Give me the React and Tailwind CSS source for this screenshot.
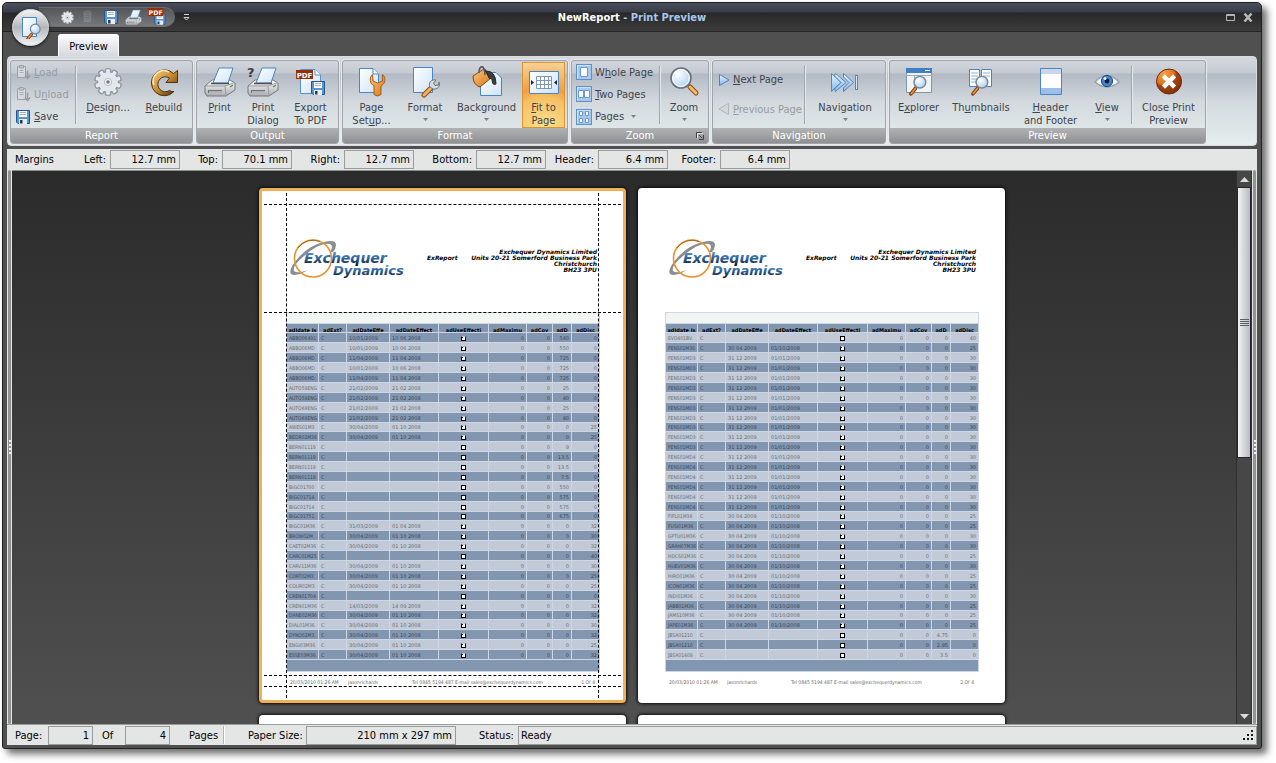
// src/App.jsx

import { Fragment } from "react";

const MARGINS = [
  { id: "left", label: "Left:", value: "12.7 mm", width: "w-[36px]" },
  { id: "top", label: "Top:", value: "70.1 mm", width: "w-[38px]" },
  { id: "right", label: "Right:", value: "12.7 mm", width: "w-[48px]" },
  { id: "bottom", label: "Bottom:", value: "12.7 mm", width: "w-[58px]" },
  { id: "header", label: "Header:", value: "6.4 mm", width: "w-[48px]" },
  { id: "footer", label: "Footer:", value: "6.4 mm", width: "w-[48px]" },
];

const COLUMNS = [
  { name: "adIdate Is", width: "w-[32px]" },
  { name: "adExt?", width: "w-[28px]" },
  { name: "adDateEffe", width: "w-[43px]" },
  { name: "adDateEffect", width: "w-[49px]" },
  { name: "adUseEffecti", width: "w-[50px]" },
  { name: "adMaximu", width: "w-[38px]" },
  { name: "adCov", width: "w-[26px]" },
  { name: "adD", width: "w-[19px]" },
  { name: "adDisc", width: "w-[28px]" },
];

// ref, start, end, ticked, price, discount
const PAGE_ONE = [
  ["ABBO06491", "10/01/2009", "10 06 2008", true, "540", "0"],
  ["ABBO06MD", "10/01/2009", "10 06 2008", true, "550", "0"],
  ["ABBO06MD", "11/04/2009", "11 04 2008", true, "725", "0"],
  ["ABBO06MD", "10/01/2009", "10 06 2008", true, "725", "0"],
  ["ABBO06MD", "11/04/2009", "11 04 2008", true, "725", "0"],
  ["AUTO59ENG", "21/02/2009", "21 02 2008", true, "25", "0"],
  ["AUTO59ENG", "21/02/2009", "21 02 2008", true, "40", "0"],
  ["AUTO69ENG", "21/02/2009", "21 02 2008", true, "25", "0"],
  ["AUTO69ENG", "21/02/2009", "21 02 2008", true, "40", "0"],
  ["AWES01M3", "30/04/2009", "01 10 2008", true, "0", "25"],
  ["BEDR02M36", "30/04/2009", "01 10 2008", true, "0", "25"],
  ["BERN01119", "", "", false, "9", "0"],
  ["BERN01119", "", "", false, "13.5", "0"],
  ["BERN01119", "", "", false, "13.5", "0"],
  ["BERN01119", "", "", false, "7.5", "0"],
  ["BIGC01700", "", "", false, "550", "0"],
  ["BIGC01714", "", "", false, "575", "0"],
  ["BIGC01714", "", "", false, "575", "0"],
  ["BIGC01751", "", "", false, "675", "0"],
  ["BIGC01M36", "31/03/2009", "01 04 2008", true, "0", "32"],
  ["BROW02M", "30/04/2009", "01 10 2008", true, "0", "30"],
  ["CAET02M36", "30/04/2009", "01 10 2008", true, "0", "32"],
  ["CARC01M25", "", "", false, "0", "40"],
  ["CARV11M36", "30/04/2009", "01 10 2008", true, "0", "30"],
  ["CORT02M3", "30/04/2009", "01 10 2008", true, "0", "25"],
  ["COUR02M3", "30/04/2009", "01 10 2008", true, "0", "25"],
  ["CREN01704", "", "", false, "0", "0"],
  ["CREN01M36", "14/03/2009", "14 09 2008", true, "0", "32"],
  ["DANE02M36", "30/04/2009", "01 10 2008", true, "0", "32"],
  ["DIAL01M36", "30/04/2009", "01 10 2008", true, "0", "30"],
  ["DYNO02M3", "30/04/2009", "01 10 2008", true, "0", "32"],
  ["ENGI03M36", "30/04/2009", "01 10 2008", true, "0", "25"],
  ["ESSE03M36", "30/04/2009", "01 10 2008", true, "0", "32"],
];

const fens = (ref) => [ref, "31 12 2009", "01/01/2009", true, "0", "30"];
const april = (ref, discount) => [ref, "30 04 2009", "01/10/2008", true, "0", discount];

const PAGE_TWO = [
  ["EVO401BV.", "", "", false, "0", "40"],
  april("FENS01M36", "25"),
  ...Array.from({ length: 10 }, () => fens("FENS01MD3")),
  ...Array.from({ length: 6 }, () => fens("FENS01MD4")),
  april("FIFL01M36", "25"),
  april("FUSI01M36", "25"),
  april("GPTU01M36", "30"),
  april("GRAH07M36", "30"),
  april("HDCS01M36", "25"),
  april("HUEV01M36", "30"),
  april("HIRO01M36", "25"),
  april("ICON01M36", "25"),
  april("INDI01M36", "30"),
  april("JABB01M36", "25"),
  april("JAMS10M36", "25"),
  april("JAPE01M36", "25"),
  ["JBSA01210", "", "", false, "4.75", "0"],
  ["JBSA01210", "", "", false, "2.95", "0"],
  ["JBSA01409", "", "", false, "3.5", "0"],
];

/* ---------- icons ---------- */

function Icon({ size = 32, className = "", children }) {
  return (
    <svg
      width={size}
      height={size}
      viewBox={`0 0 ${size} ${size}`}
      fill="none"
      className={`shrink-0 ${className}`}
      aria-hidden="true"
    >
      {children}
    </svg>
  );
}

function Defs() {
  return (
    <svg width="0" height="0" className="absolute" aria-hidden="true">
      <defs>
        <linearGradient id="paper" x1="0" y1="0" x2="1" y2="1">
          <stop offset="0" stopColor="#ffffff" />
          <stop offset="1" stopColor="#cfe3f8" />
        </linearGradient>
        <linearGradient id="orange" x1="0" y1="0" x2="1" y2="1">
          <stop offset="0" stopColor="#fbc878" />
          <stop offset="1" stopColor="#d8741c" />
        </linearGradient>
        <linearGradient id="steel" x1="0" y1="0" x2="0" y2="1">
          <stop offset="0" stopColor="#fdfdfd" />
          <stop offset="1" stopColor="#a9adb2" />
        </linearGradient>
        <linearGradient id="gold" x1="0" y1="0" x2="1" y2="1">
          <stop offset="0" stopColor="#f9d48a" />
          <stop offset="0.5" stopColor="#c98a2e" />
          <stop offset="1" stopColor="#3a2a14" />
        </linearGradient>
        <linearGradient id="blue" x1="0" y1="0" x2="0" y2="1">
          <stop offset="0" stopColor="#e9f4fe" />
          <stop offset="1" stopColor="#86b6e6" />
        </linearGradient>
        <radialGradient id="glass" cx="0.35" cy="0.3" r="0.8">
          <stop offset="0" stopColor="#ffffff" />
          <stop offset="1" stopColor="#a9cdee" />
        </radialGradient>
        <radialGradient id="ember" cx="0.3" cy="0.2" r="0.9">
          <stop offset="0" stopColor="#f9a24a" />
          <stop offset="0.45" stopColor="#e0721c" />
          <stop offset="0.55" stopColor="#a8430f" />
          <stop offset="1" stopColor="#7a2c0c" />
        </radialGradient>
        <linearGradient id="logoBlue" x1="0" y1="0" x2="0" y2="1">
          <stop offset="0" stopColor="#6aa6da" />
          <stop offset="0.5" stopColor="#2f66a0" />
          <stop offset="1" stopColor="#0b1726" />
        </linearGradient>
      </defs>
    </svg>
  );
}

const teeth = [0, 36, 72, 108, 144, 180, 216, 252, 288, 324];

function GearIcon({ size = 32 }) {
  return (
    <svg width={size} height={size} viewBox="0 0 32 32" className="shrink-0" aria-hidden="true">
      <g fill="#eef0f3" stroke="#8f98a4" strokeWidth="1.4">
        {teeth.map((a) => (
          <rect key={a} x="13.4" y="2.6" width="5.2" height="6" rx="1.8" transform={`rotate(${a} 16 16)`} />
        ))}
        <circle cx="16" cy="16" r="10.4" />
      </g>
      {teeth.map((a) => (
        <rect key={a} x="14.2" y="4.4" width="3.6" height="5" fill="#e6e9ed" transform={`rotate(${a} 16 16)`} />
      ))}
      <circle cx="16" cy="16" r="9.4" fill="#e3e6ea" />
      <circle cx="16" cy="16" r="3.6" fill="#f6f7f8" stroke="#b4bac2" />
      <circle cx="16" cy="16" r="1.8" fill="#6f7986" />
    </svg>
  );
}

function RebuildIcon() {
  return (
    <Icon>
      <path
        d="M26 25.500A13 13 0 1 1 25.500 7.500L29.500 4.500V16.500H18L21.500 12A7.500 7.500 0 1 0 21.500 24.500Q24 26 26 25.500Z"
        fill="url(#gold)"
        stroke="#4a3516"
      />
      <path d="M6 19A10.500 10.500 0 0 1 21 6" stroke="#fbe3ab" strokeWidth="1.600" />
    </Icon>
  );
}

function PrinterBody() {
  return (
    <>
      <path d="M1 20L8 14H26L31 17V24L22 30H3L1 27Z" fill="url(#steel)" stroke="#77797d" />
      <path d="M1 20H21L31 16.500M21 20L22 30" stroke="#9a9da1" />
      <path d="M4 24H18V27H4Z" fill="#6e7175" />
      <path d="M5 26H18" stroke="#f3f3f3" />
      <path d="M9 17L15 2H29L24 17Z" fill="url(#paper)" stroke="#4a86c5" />
      <path d="M7 17.500H25" stroke="#4d4f52" strokeWidth="1.500" />
      <path d="M26 21L29 19" stroke="#4c9a3d" strokeWidth="1.500" />
    </>
  );
}

function PrinterIcon({ size = 32 }) {
  return (
    <svg width={size} height={size} viewBox="0 0 32 32" fill="none" className="shrink-0" aria-hidden="true">
      <PrinterBody />
    </svg>
  );
}

function PrintDialogIcon() {
  return (
    <Icon className="overflow-visible">
      <PrinterBody />
      <text x="0" y="11" fontSize="13" fontWeight="bold" fill="#3a3c40" fontFamily="DejaVu Sans">
        ?
      </text>
    </Icon>
  );
}

function Floppy() {
  return (
    <>
      <path d="M1.500 1.500H14.500V14.500H3L1.500 13Z" fill="#5a93d0" stroke="#245591" />
      <path d="M4 2H12V8H4Z" fill="#fff" />
      <path d="M5 3.500H11M5 5.500H11" stroke="#9fb0c2" />
      <path d="M4 10H12V15H4Z" fill="#e6edf4" />
      <path d="M5 11H7.500V14.500H5Z" fill="#223a56" />
    </>
  );
}

function SaveIcon() {
  return (
    <Icon size={16}>
      <Floppy />
    </Icon>
  );
}

function PdfBadge({ className }) {
  return (
    <g className={className}>
      <rect width="17" height="9" fill="#93300b" />
      <text x="8.500" y="7.500" fontSize="7" fontWeight="bold" textAnchor="middle" fill="#fff" fontFamily="DejaVu Sans">
        PDF
      </text>
    </g>
  );
}

function PdfIcon() {
  return (
    <Icon>
      <path d="M5.500 3.500H20L25.500 9V27.500H5.500Z" fill="url(#paper)" stroke="#5792cf" />
      <path d="M20 3.500V9H25.500" fill="#fff" stroke="#5792cf" />
      <g transform="translate(15 14)">
        <Floppy />
      </g>
      <g transform="translate(1 4)">
        <PdfBadge />
      </g>
    </Icon>
  );
}

function PdfSmallIcon() {
  return (
    <svg width="18" height="18" viewBox="0 0 20 20" fill="none" aria-hidden="true">
      <g transform="translate(6 5) scale(0.9)">
        <Floppy />
      </g>
      <PdfBadge />
    </svg>
  );
}

function ClipboardIcon() {
  return (
    <Icon size={16}>
      <path d="M2.500 2.500H10.500V13.500H2.500Z" fill="#d5d8dc" stroke="#9da2a9" />
      <path d="M4.500 1.500H8.500V4H4.500Z" fill="#c2c6cb" stroke="#9da2a9" />
      <path d="M4.500 6.500H8.500M4.500 8.500H8.500" stroke="#aaafb6" />
      <path d="M12.500 6.500V14M10 11.500L12.500 14.500L15 11.500" stroke="#989da5" strokeWidth="1.500" />
    </Icon>
  );
}

function PageSetupIcon() {
  return (
    <Icon>
      <path d="M3.500 2.500H17L22.500 8V26.500H3.500Z" fill="url(#paper)" stroke="#4a86c5" />
      <path d="M17 2.500V8H22.500" fill="#fff" stroke="#4a86c5" />
      <path
        d="M16.500 8.500C13 11.500 13.500 17.500 18 20V28.500Q21.500 31.500 25 28.500V20C30 17 30 11.500 26.500 8.500V15L21.500 17L17 15Z"
        fill="url(#orange)"
        stroke="#a55a14"
      />
    </Icon>
  );
}

function FormatIcon() {
  return (
    <Icon>
      <path d="M4.500 1.500H23.500V26.500H4.500Z" fill="url(#paper)" stroke="#4a86c5" />
      <path d="M15 29L23 21" stroke="#8a4a12" strokeWidth="5" strokeLinecap="round" />
      <path d="M15 29L22 22" stroke="#f6b25c" strokeWidth="3" strokeLinecap="round" />
      <path
        d="M21 21C19 17 22 13 27 14L24.500 17L26 19.500L29.500 19L30 16C32 20 28 24 24 23Z"
        fill="#d8dce1"
        stroke="#697480"
      />
    </Icon>
  );
}

function BackgroundIcon() {
  return (
    <Icon>
      <path d="M9.500 6.500H25L30.500 12V29.500H9.500Z" fill="url(#paper)" stroke="#4a86c5" />
      <path d="M2 10L13 3L20 12L9 21Q2 19 2 10Z" fill="url(#orange)" stroke="#8a4410" />
      <path d="M13 3L20 12" stroke="#5b2d0a" strokeWidth="2" />
      <path d="M8 7Q8 0 12 1Q14 4 14 9" stroke="#55585c" strokeWidth="1.500" />
      <path d="M15 5Q25 5 25 18Q21 20 21 13L18 12Z" fill="#3c3f42" stroke="#26282a" />
    </Icon>
  );
}

function FitIcon() {
  return (
    <Icon>
      <path d="M1.500 5.500H30.500V27.500H1.500Z" fill="url(#paper)" stroke="#4a86c5" />
      <path
        d="M8.500 10.500H23.500V22.500H8.500ZM8.500 14.500H23.500M8.500 18.500H23.500M12.500 10.500V22.500M16.500 10.500V22.500M20.500 10.500V22.500"
        fill="#fff"
        stroke="#7f98b4"
      />
      <path d="M3 14L6 16.500L3 19ZM29 14L26 16.500L29 19Z" fill="#1f2224" />
    </Icon>
  );
}

function Loupe({ x = 0, y = 0, scale = 1 }) {
  return (
    <g transform={`translate(${x} ${y}) scale(${scale})`}>
      <path d="M6 15L1 21" stroke="#7d3c0e" strokeWidth="4" strokeLinecap="round" />
      <path d="M6 15L1.500 20.500" stroke="#f0913a" strokeWidth="2" strokeLinecap="round" />
      <circle cx="11" cy="8" r="6.500" fill="url(#glass)" stroke="#7b8796" strokeWidth="1.600" />
    </g>
  );
}

function ZoomIcon() {
  return (
    <Icon>
      <path d="M22 21L28 27" stroke="#8a4a12" strokeWidth="5" strokeLinecap="round" />
      <path d="M22 21L28 27" stroke="#f7bb68" strokeWidth="3" strokeLinecap="round" />
      <circle cx="13" cy="12" r="10" fill="url(#glass)" stroke="#6b7078" strokeWidth="1.600" />
      <circle cx="13" cy="12" r="8.300" stroke="#ffffff" />
    </Icon>
  );
}

function LayoutIcon({ path }) {
  return (
    <Icon size={16}>
      <rect x="0.500" y="0.500" width="15" height="15" fill="#a8c8ec" stroke="#5d8fc8" />
      <path d="M1.500 14.500V1.500H14.500" stroke="#cfe2f7" />
      <path d={path} fill="#fff" stroke="#6698d2" />
    </Icon>
  );
}

function NextIcon() {
  return (
    <Icon size={12}>
      <path d="M1.500 0.500L11 6L1.500 11.500Z" fill="url(#blue)" stroke="#4485c9" />
    </Icon>
  );
}

function PrevIcon() {
  return (
    <Icon size={12}>
      <path d="M10.500 0.500L1 6L10.500 11.500Z" fill="#d3d6da" stroke="#b2b6bb" />
    </Icon>
  );
}

function NavigationIcon() {
  return (
    <Icon>
      <path d="M2.500 7.500L12 16.500L2.500 25.500Z" fill="url(#blue)" stroke="#4a8acb" />
      <path d="M6.500 7.500L17 16.500L6.500 25.500L5.500 23L12 16.500L5.500 10Z" fill="url(#blue)" stroke="#4a8acb" />
      <path d="M14.500 7.500L24.500 16.500L14.500 25.500V22L20 16.500L14.500 11Z" fill="url(#blue)" stroke="#4a8acb" />
      <rect x="26.500" y="9.500" width="2" height="14" fill="#d6e8fa" stroke="#4a8acb" />
    </Icon>
  );
}

function ExplorerIcon() {
  return (
    <Icon>
      <path d="M3.500 2.500H28.500V26.500H3.500Z" fill="#f1f4f7" stroke="#8494a5" />
      <path d="M3 2H29V7H3Z" fill="#3f7fc6" />
      <path d="M22 4.500H27" stroke="#fff" />
      <path d="M3 9.500H29M11.500 9V26" stroke="#9eacba" />
      <Loupe x={7} y={9} scale={0.9} />
    </Icon>
  );
}

function ThumbnailsIcon() {
  return (
    <Icon>
      <path d="M4.500 3.500H14.500V20.500H4.500ZM16.500 3.500H26.500V20.500H16.500Z" fill="#fff" stroke="#4a86c5" />
      <path d="M6 7H13M6 10H13M6 13H13M6 16H13M18 7H25M18 10H25" stroke="#8bb3dd" />
      <Loupe x={7} y={9} scale={0.9} />
    </Icon>
  );
}

function HeaderFooterIcon() {
  return (
    <Icon>
      <path d="M5.500 2.500H26.500V28.500H5.500Z" fill="#fdfdfe" stroke="#4a86c5" />
      <path d="M6 3H26V8H6Z" fill="#ccd6ea" />
      <path d="M6 22H26V28H6Z" fill="#9cc0ea" />
    </Icon>
  );
}

function ViewIcon() {
  return (
    <Icon>
      <path d="M4 16Q16 3 28 16Q16 26 4 16Z" fill="#f7f8fa" stroke="#9a9fa8" strokeWidth="1.400" />
      <circle cx="16" cy="15" r="5.600" fill="#4585cc" stroke="#1d4a80" />
      <circle cx="16" cy="15" r="2.400" fill="#0c1c30" />
      <circle cx="14" cy="12.500" r="1.500" fill="#e6f2ff" />
    </Icon>
  );
}

function CloseIcon() {
  return (
    <Icon>
      <circle cx="16" cy="15.500" r="12.500" fill="url(#ember)" stroke="#6d2a0c" />
      <path d="M12 11.500L20 19.500M20 11.500L12 19.500" stroke="#fff" strokeWidth="4.500" strokeLinecap="square" />
    </Icon>
  );
}

function AppOrb() {
  return (
    <button
      aria-label="Application menu"
      className="absolute left-[9px] top-[6px] z-10 flex size-[37px] items-center justify-center rounded-full border border-[#d9dbdd] bg-linear-to-b from-[#f4f4f5] via-[#b4b6b9] to-[#f2f3f4] shadow-[0_1px_3px_#111]"
    >
      <svg width="23" height="23" viewBox="0 0 23 23" fill="none" aria-hidden="true">
        <path d="M3.500 1.500H17.500V20.500H3.500Z" fill="url(#paper)" stroke="#4a86c5" />
        <Loupe x={8} y={7} scale={0.75} />
      </svg>
    </button>
  );
}

/* ---------- ribbon ---------- */

// "&" in front of a letter marks its access key
function Caption({ text }) {
  const at = text.indexOf("&");
  if (at < 0) return text;
  return (
    <>
      {text.slice(0, at)}
      <span className="underline underline-offset-1">{text[at + 1]}</span>
      {text.slice(at + 2)}
    </>
  );
}

function Arrow() {
  return (
    <svg width="5" height="3" viewBox="0 0 5 3" className="shrink-0" aria-hidden="true">
      <path d="M0 0H5L2.500 3Z" fill="#7d8187" />
    </svg>
  );
}

function BigButton({ icon, lines, width, menu, active }) {
  return (
    <button
      className={`mt-px flex flex-col items-center border pt-[3px] leading-[13px] ${width} ${
        active
          ? "border-[#d9962f] bg-[radial-gradient(circle_at_50%_100%,#fde28f,#f6c064_45%,#ee9f45_60%,#f9d59a)]"
          : "border-transparent"
      }`}
    >
      {icon}
      <span className="mt-[3px] flex flex-col items-center whitespace-nowrap">
        {lines.map((line) => (
          <span key={line}>
            <Caption text={line} />
          </span>
        ))}
      </span>
      {menu && (
        <span className="mt-1">
          <Arrow />
        </span>
      )}
    </button>
  );
}

function SmallButton({ icon, text, disabled, menu }) {
  return (
    <button
      disabled={disabled}
      className={`flex items-center gap-[3px] whitespace-nowrap ${disabled ? "text-[#989da4]" : ""}`}
    >
      {icon}
      <span>
        <Caption text={text} />
      </span>
      {menu && (
        <span className="ml-1">
          <Arrow />
        </span>
      )}
    </button>
  );
}

function Divider() {
  return <div className="mx-[2px] my-1 w-px bg-[#a2a6ab] shadow-[1px_0_0_#e6e9ec]" />;
}

function Group({ title, launcher, children }) {
  return (
    <section className="flex flex-col overflow-hidden rounded-[3px] border border-[#a0a4a8] shadow-[0_0_0_1px_#e8ebee]">
      <div className="flex h-[67px] pl-px pr-[2px]">{children}</div>
      <h2 className="relative h-[15px] bg-linear-to-b from-[#b0b2b3] to-[#8e9091] pt-px text-center leading-[14px] text-white">
        {title}
        {launcher && (
          <button aria-label="Zoom options" className="absolute right-1 top-1">
            <svg width="8" height="8" viewBox="0 0 8 8" fill="none" className="block" aria-hidden="true">
              <path d="M0.500 6V0.500H6" stroke="#3f4143" />
              <path d="M3 3L6 6M7.500 3V7.500H3" stroke="#3f4143" />
              <path d="M1.500 6.500V1.500H6.500" stroke="#e8e8e8" />
            </svg>
          </button>
        )}
      </h2>
    </section>
  );
}

function Ribbon() {
  return (
    <div className="flex gap-[3px] overflow-hidden rounded-[4px] border border-[#d9dcdf] bg-[linear-gradient(#d6dadf,#c5cad2_16px,#b3bac5_17px,#d3d9dd_45px,#e6eeef_88px)] pb-px pl-[2px] pt-[3px] text-[#3e444c]">
      <Group title="Report">
        <div className="grid w-[61px] grid-rows-3 pl-[3px]">
          <SmallButton icon={<ClipboardIcon />} text="&Load" disabled />
          <SmallButton icon={<ClipboardIcon />} text="U&nload" disabled />
          <SmallButton icon={<SaveIcon />} text="&Save" />
        </div>
        <Divider />
        <BigButton icon={<GearIcon />} lines={["&Design..."]} width="w-[60px]" />
        <BigButton icon={<RebuildIcon />} lines={["&Rebuild"]} width="w-[52px]" />
      </Group>

      <Group title="Output">
        <BigButton icon={<PrinterIcon />} lines={["&Print"]} width="w-[43px]" />
        <BigButton icon={<PrintDialogIcon />} lines={["Print", "Dialog"]} width="w-[44px]" />
        <BigButton icon={<PdfIcon />} lines={["Export", "To PDF"]} width="w-[51px]" />
      </Group>

      <Group title="Format">
        <BigButton icon={<PageSetupIcon />} lines={["Page", "Set&up..."]} width="w-[55px]" />
        <BigButton icon={<FormatIcon />} lines={["Format"]} width="w-[52px]" menu />
        <BigButton icon={<BackgroundIcon />} lines={["Background"]} width="w-[71px]" menu />
        <BigButton icon={<FitIcon />} lines={["&Fit to", "Page"]} width="w-[43px]" active />
      </Group>

      <Group title="Zoom" launcher>
        <div className="grid w-[84px] grid-rows-3 pl-[3px]">
          <SmallButton icon={<LayoutIcon path="M4.500 3.500H11.500V12.500H4.500Z" />} text="W&hole Page" />
          <SmallButton icon={<LayoutIcon path="M2.500 4.500H7.500V11.500H2.500ZM8.500 4.500H13.500V11.500H8.500Z" />} text="&Two Pages" />
          <SmallButton
            icon={
              <LayoutIcon path="M3.500 2.500H6.500V6.500H3.500ZM9.500 2.500H12.500V6.500H9.500ZM3.500 9.500H6.500V13.500H3.500ZM9.500 9.500H12.500V13.500H9.500Z" />
            }
            text="Pages"
            menu
          />
        </div>
        <Divider />
        <BigButton icon={<ZoomIcon />} lines={["Zoom"]} width="w-[44px]" menu />
      </Group>

      <Group title="Navigation">
        <div className="grid w-[88px] grid-rows-2 py-1 pl-1">
          <SmallButton icon={<NextIcon />} text="&Next Page" />
          <SmallButton icon={<PrevIcon />} text="&Previous Page" disabled />
        </div>
        <Divider />
        <BigButton icon={<NavigationIcon />} lines={["Navigation"]} width="w-[76px]" menu />
      </Group>

      <Group title="Preview">
        <BigButton icon={<ExplorerIcon />} lines={["E&xplorer"]} width="w-[55px]" />
        <BigButton icon={<ThumbnailsIcon />} lines={["Th&umbnails"]} width="w-[70px]" />
        <BigButton icon={<HeaderFooterIcon />} lines={["&Header", "and Footer"]} width="w-[69px]" />
        <BigButton icon={<ViewIcon />} lines={["&View"]} width="w-[44px]" menu />
        <Divider />
        <BigButton icon={<CloseIcon />} lines={["Close Print", "Preview"]} width="w-[69px]" />
      </Group>
    </div>
  );
}

/* ---------- title bar ---------- */

function TitleBar() {
  return (
    <header className="relative flex h-[29px] shrink-0 items-center border-b border-[#242424] bg-[linear-gradient(#4a4e5c,#3a3d49_9px,#282828_10px,#3c3c3c)] pr-2">
      <div className="ml-[36px] flex h-5 items-center gap-[6px] rounded-r-full border border-l-0 border-[#6d6d6f] bg-linear-to-b from-[#55565a] to-[#77787a] pl-[21px] pr-2 text-white">
        <button aria-label="Design">
          <GearIcon size={15} />
        </button>
        <button aria-label="Unload" disabled className="opacity-40 brightness-75">
          <ClipboardIcon />
        </button>
        <button aria-label="Save">
          <SaveIcon />
        </button>
        <button aria-label="Print">
          <PrinterIcon size={17} />
        </button>
        <button aria-label="Export to PDF">
          <PdfSmallIcon />
        </button>
      </div>
      <button aria-label="Customize toolbar" className="ml-2">
        <svg width="7" height="7" viewBox="0 0 7 7" fill="none" aria-hidden="true">
          <path d="M1 0.500H6" stroke="#d0d0d0" />
          <path d="M1 3.500H6L3.500 6Z" stroke="#d0d0d0" />
        </svg>
      </button>
      <h1 className="pointer-events-none absolute inset-x-0 text-center font-bold text-white">
        NewReport <span className="text-[#a9c8ee]">- Print Preview</span>
      </h1>
      <div className="ml-auto flex items-center gap-2">
        <button aria-label="Maximize">
          <svg width="9" height="7" viewBox="0 0 9 7" fill="none" aria-hidden="true">
            <path d="M0.500 0.500H8.500V6.500H0.500Z" stroke="#b4b4b6" />
            <path d="M0 1.500H9" stroke="#b4b4b6" />
          </svg>
        </button>
        <button aria-label="Close">
          <svg width="10" height="9" viewBox="0 0 10 9" fill="none" aria-hidden="true">
            <path d="M1.500 0.500L8.500 8.500M8.500 0.500L1.500 8.500" stroke="#b8b8ba" strokeWidth="2.500" />
          </svg>
        </button>
      </div>
    </header>
  );
}

/* ---------- bars ---------- */

const FIELD = "h-[19px] border border-[#9a9c9b] bg-[#e4e6e5] px-[3px] text-right text-black outline-none";

function MarginsBar() {
  return (
    <form className="flex h-[21px] shrink-0 items-center bg-[#e4e6e5] pl-2">
      <span className="w-[59px] whitespace-nowrap">Margins</span>
      {MARGINS.map((m) => (
        <Fragment key={m.id}>
          <label htmlFor={m.id} className={`mr-1 shrink-0 whitespace-nowrap text-right ${m.width} ${m.id === "left" ? "-ml-1" : ""}`}>
            {m.label}
          </label>
          <input id={m.id} defaultValue={m.value} className={`w-[70px] ${FIELD}`} />
        </Fragment>
      ))}
    </form>
  );
}

function StatusBar() {
  return (
    <footer className="flex h-[21px] shrink-0 items-center border-t border-[#9a9c9b] bg-[#e4e6e5] pl-2">
      <label htmlFor="page" className="w-[33px]">
        Page:
      </label>
      <input id="page" defaultValue="1" className={`w-[45px] ${FIELD}`} />
      <label htmlFor="count" className="w-8 pl-[9px]">
        Of
      </label>
      <input id="count" readOnly value="4" className={`w-[45px] ${FIELD}`} />
      <span className="w-[53px] pl-[19px]">Pages</span>
      <span className="h-[18px] w-px bg-[#b4b6b5] shadow-[1px_0_0_#fff]" />
      <label htmlFor="paper-size" className="w-[82px] whitespace-nowrap pl-6">
        Paper Size:
      </label>
      <input id="paper-size" readOnly value="210 mm x 297 mm" className={`w-[150px] ${FIELD}`} />
      <span className="w-[62px] pl-[23px]">Status:</span>
      <output className="flex h-[19px] flex-1 items-center justify-between border border-[#9a9c9b] pl-[2px] pr-[3px]">
        Ready
        <svg width="10" height="10" viewBox="0 0 10 10" aria-hidden="true">
          <path d="M8 0H10V2H8ZM8 4H10V6H8ZM4 4H6V6H4ZM8 8H10V10H8ZM4 8H6V10H4ZM0 8H2V10H0Z" fill="#1c1c1c" />
        </svg>
      </output>
    </footer>
  );
}

/* ---------- report pages ---------- */

function Logo() {
  return (
    <svg width="118" height="40" viewBox="0 0 118 40" fill="none" className="shrink-0" role="img" aria-label="Exchequer Dynamics logo">
      <path
        d="M34 3Q46 0 46 6Q46 10 43 13H40Q44 7 40 5Q30 3 14 17Q2 27 4 32Q7 35 18 31Q6 38 1 35Q-2 30 9 18Q20 6 34 3Z"
        fill="#8b8e91"
      />
      <circle cx="23" cy="19.500" r="18.500" stroke="#e8952f" strokeWidth="1.600" />
      <path d="M8 9A18.500 18.500 0 0 1 30 2.500" stroke="#a85f18" />
      <text x="14" y="24" fontSize="14" fontWeight="bold" fontStyle="italic" fill="url(#logoBlue)" fontFamily="DejaVu Sans">
        Exchequer
      </text>
      <text x="43" y="36" fontSize="13" fontWeight="bold" fontStyle="italic" fill="url(#logoBlue)" fontFamily="DejaVu Sans">
        Dynamics
      </text>
    </svg>
  );
}

function ReportTable({ rows, darkFirst }) {
  return (
    <table className="w-full table-fixed border-separate border-spacing-0 border-l border-[#ccd6e6] font-['DejaVu_Sans',sans-serif] text-[5px] leading-[7px]">
      <colgroup>
        {COLUMNS.map((c) => (
          <col key={c.name} className={c.width} />
        ))}
      </colgroup>
      <thead>
        <tr>
          <td colSpan={9} className="h-[12px] border-y border-r border-[#ccd6e6] bg-[#f3f5f3] p-0" />
        </tr>
        <tr>
          {COLUMNS.map((c) => (
            <th key={c.name} className="h-[9px] border-b border-r border-[#ccd6e6] bg-[#8296b0] p-0 align-bottom">
              <div className="h-[5px] overflow-hidden whitespace-nowrap text-center text-black">{c.name}</div>
            </th>
          ))}
        </tr>
      </thead>
      <tbody>
        {rows.map(([ref, start, end, ticked, price, discount], i) => {
          const dark = (i % 2 === 0) === darkFirst;
          // row heights round down by a pixel now and then
          const height = i === 9 || i === 18 || i === 28 ? "h-[9px]" : "h-[10px]";
          const cell = `${height} overflow-hidden whitespace-nowrap border-b border-r border-[#ccd6e6] px-[2px] pb-0 pt-px`;
          return (
            <tr key={i} className={dark ? "bg-[#8296b0] text-[#3d4856]" : "bg-[#c1cad6] text-[#6c7075]"}>
              <td className={`${cell} font-['DejaVu_Sans_Condensed',sans-serif]`}>{ref}</td>
              <td className={cell}>C</td>
              <td className={cell}>{start}</td>
              <td className={cell}>{end}</td>
              <td className={cell}>
                <input
                  type="checkbox"
                  readOnly
                  checked={ticked}
                  aria-label={`${ref} effective`}
                  className="mx-auto block size-[5px] appearance-none border border-black bg-white checked:border-t-[#c1cad6] checked:bg-[linear-gradient(135deg,#000_25%,#fff_25%)]"
                />
              </td>
              <td className={`${cell} text-right`}>0</td>
              <td className={`${cell} text-right`}>0</td>
              <td className={`${cell} text-right`}>{price}</td>
              <td className={`${cell} text-right`}>{discount}</td>
            </tr>
          );
        })}
      </tbody>
      <tfoot>
        <tr>
          <td colSpan={9} className="h-[12px] border-b border-r border-[#ccd6e6] bg-[#8296b0] p-0" />
        </tr>
      </tfoot>
    </table>
  );
}

function Guides() {
  return (
    <div className="pointer-events-none absolute inset-[2px]">
      <div className="absolute inset-y-0 left-[22px] border-l border-dashed border-black" />
      <div className="absolute inset-y-0 right-[22px] border-l border-dashed border-black" />
      <div className="absolute inset-x-0 top-[11px] border-t border-dashed border-black" />
      <div className="absolute inset-x-0 top-[119px] border-t border-dashed border-black" />
      <div className="absolute inset-x-0 bottom-[22px] border-t border-dashed border-black" />
      <div className="absolute inset-x-0 bottom-[11px] border-t border-dashed border-black" />
    </div>
  );
}

function Page({ number, rows, darkFirst, selected }) {
  return (
    <article
      className={`relative h-[515px] w-[367px] rounded-[4px] border-[3px] bg-white px-6 shadow-[0_0_3px_1px_#0c0c0c] ${
        selected ? "border-[#f0b055]" : "border-white"
      }`}
    >
      {rows && (
        <>
          <div className="flex h-[121px] items-start pl-1 pr-[2px] pt-12 text-[6px] font-bold italic leading-[6px] text-black font-['DejaVu_Sans',sans-serif]">
            <Logo />
            <p className="ml-[19px] mt-4">ExReport</p>
            <address className="ml-auto mt-[10px] whitespace-nowrap text-right">
              Exchequer Dynamics Limited
              <br />
              Units 20-21 Somerford Business Park
              <br />
              Christchurch
              <br />
              BH23 3PU
            </address>
          </div>
          <ReportTable rows={rows} darkFirst={darkFirst} />
          <div className="grid grid-cols-[58px_64px_1fr_auto] whitespace-nowrap pl-1 pr-1 pt-[7px] text-[5px] leading-[6px] text-[#6d6d6d]">
            <span>20/03/2010 01:26 AM</span>
            <span>jasonrichards</span>
            <span>Tel 0845 5194 487 E-mail sales@exchequerdynamics.com</span>
            <span>{number} Of 4</span>
          </div>
        </>
      )}
      {selected && <Guides />}
    </article>
  );
}

function Splitter() {
  return (
    <div className="mx-px flex w-[3px] flex-col items-center justify-center gap-[2px] rounded-full bg-[#929493]">
      {[0, 1, 2, 3].map((n) => (
        <span key={n} className="size-[2px] bg-[#f4f4f4]" />
      ))}
    </div>
  );
}

function ScrollBar() {
  return (
    <div className="flex w-4 shrink-0 flex-col border-x border-[#303030] bg-[#474747]">
      <button aria-label="Scroll up" className="flex h-4 items-center justify-center">
        <svg width="9" height="5" viewBox="0 0 9 5" aria-hidden="true">
          <path d="M4.500 0L9 5H0Z" fill="#dcdcdc" />
        </svg>
      </button>
      <div className="flex min-h-0 flex-1 flex-col">
        <div className="flex h-[52%] flex-col items-center justify-center gap-px border border-[#2a2230] bg-linear-to-r from-[#f3f4f5] via-[#d4d6d9] to-[#b9bcc3]">
          {[0, 1, 2, 3].map((n) => (
            <span key={n} className="h-px w-[9px] bg-[#5c5e60]" />
          ))}
        </div>
      </div>
      <button aria-label="Scroll down" className="flex h-4 items-center justify-center">
        <svg width="9" height="5" viewBox="0 0 9 5" aria-hidden="true">
          <path d="M0 0H9L4.500 5Z" fill="#dcdcdc" />
        </svg>
      </button>
    </div>
  );
}

export default function App() {
  return (
    <div className="flex h-screen bg-white pb-[14px] pl-[2px] pr-[14px] pt-[2px] font-['DejaVu_Sans_Condensed','DejaVu_Sans',sans-serif] text-[11px] leading-[13px] text-black">
      <Defs />
      <div className="relative flex min-w-0 flex-1 flex-col overflow-hidden rounded-t-[5px] rounded-b-[3px] border border-[#222] bg-[#505050] pb-[3px] shadow-[5px_5px_7px_#00000090]">
        <TitleBar />
        <AppOrb />
        <div className="flex h-6 shrink-0 items-end px-1">
          <button className="ml-[51px] h-[22px] w-[61px] rounded-t-[3px] border border-b-0 border-white bg-linear-to-b from-[#fbfbfc] to-[#d5d9de] pt-px text-black">
            Preview
          </button>
        </div>

        <div className="flex min-h-0 flex-1 flex-col px-1">
          <div className="mb-[3px] shrink-0">
            <Ribbon />
          </div>
          <MarginsBar />
          <main className="flex min-h-0 flex-1 bg-[#e4e6e5]">
            <Splitter />
            <div className="flex min-w-0 flex-1 border-t border-[#8c8e8d]">
              <div className="min-w-0 flex-1 overflow-hidden bg-linear-to-b from-[#2b2b2b] to-[#505050] pl-4 pt-[17px]">
                <div className="grid grid-cols-[auto_auto] justify-center gap-3">
                  <Page number={1} rows={PAGE_ONE} darkFirst selected />
                  <Page number={2} rows={PAGE_TWO} darkFirst={false} />
                  <Page number={3} />
                  <Page number={4} />
                </div>
              </div>
              <ScrollBar />
            </div>
            <Splitter />
          </main>
          <StatusBar />
        </div>
      </div>
    </div>
  );
}
